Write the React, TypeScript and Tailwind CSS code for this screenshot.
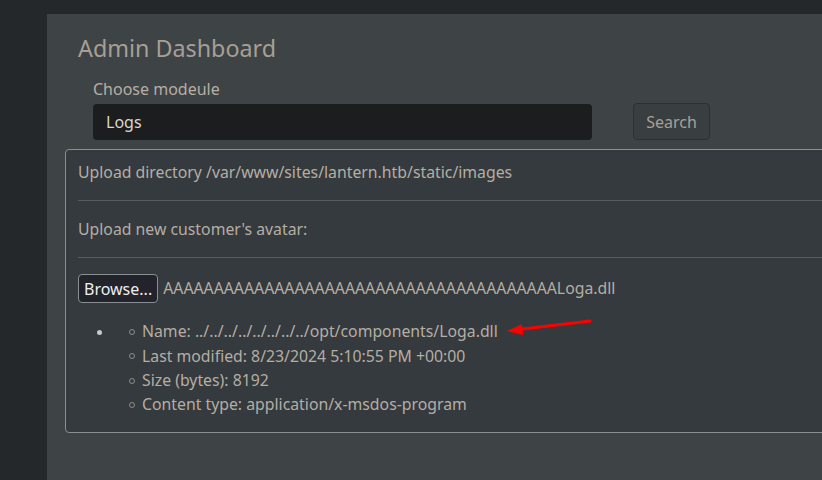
import React from "react";

export default function App() {
  const items = [
    "Name: ../../../../../../../../opt/components/Loga.dll",
    "Last modified: 8/23/2024 5:10:55 PM +00:00",
    "Size (bytes): 8192",
    "Content type: application/x-msdos-program",
  ];
  return (
    <div
      className="w-[822px] h-[480px] overflow-hidden bg-[#24282b] flex flex-col text-[#b6aea4]"
      style={{ fontFamily: '"Noto Sans", "Open Sans", sans-serif' }}
    >
      <div className="h-[14px] shrink-0" />
      <div className="flex flex-1 min-h-0">
        <div className="w-[47px] shrink-0" />
        <div className="flex-1 bg-[#3e4346] pl-[18px] pt-[20px] flex flex-col min-w-0">
          <h1 className="pl-[13px] text-[23.3px] leading-[28px] text-[#a79f95]">Admin Dashboard</h1>
          <div className="pl-[28px] mt-[17px] flex items-end">
            <div className="flex flex-col">
              <label className="text-[16px] leading-[20px] text-[#b6aea4]">Choose modeule</label>
              <div className="mt-[5px] w-[499px] h-[36px] rounded-[4px] bg-[#1b1d1f] flex items-center pl-[13px] text-[16px] text-[#ddd6cc]">
                Logs
              </div>
            </div>
            <button className="ml-[41px] w-[77px] h-[37px] rounded-[4px] border border-[#2c3033] bg-[#393e41] text-[16px] text-[#a8a096]">
              Search
            </button>
          </div>
          <div className="mt-[9px] w-[800px] h-[284px] shrink-0 border border-[#8a8f92] rounded-[4px] bg-[#343a3d] pl-[12px] pt-[10px] text-[15.8px]">
            <div className="leading-[24px]">Upload directory /var/www/sites/lantern.htb/static/images</div>
            <div className="mt-[16px] h-px bg-[#585d60]" />
            <div className="mt-[16px] leading-[24px]">Upload new customer's avatar:</div>
            <div className="mt-[16px] h-px bg-[#585d60]" />
            <div className="mt-[16px] flex items-center">
              <button className="h-[29px] px-[5px] rounded-[4px] border border-[#8a8f92] bg-[#23232b] text-[16px] text-[#eeeeee]">
                Browse...
              </button>
              <span className="ml-[5px]">AAAAAAAAAAAAAAAAAAAAAAAAAAAAAAAAAAAAAAALoga.dll</span>
            </div>
            <div className="relative mt-[17px] flex">
              <div className="w-[24px] shrink-0 flex items-center justify-end h-[24px]">
                <span className="block w-[5px] h-[5px] rounded-full bg-[#c9c9c9]" />
              </div>
              <div className="ml-[40px] flex flex-col">
                {items.map((t) => (
                  <div key={t} className="flex items-center h-[24.3px]">
                    <span className="block w-[6px] h-[6px] rounded-full border border-[#8d8d8d] mr-[7px] -ml-[13px]" />
                    <span>{t}</span>
                  </div>
                ))}
              </div>
              <svg
                className="absolute left-[428px] top-[-2px]"
                width="90"
                height="20"
                viewBox="0 0 90 20"
              >
                <line x1="84" y1="3" x2="12" y2="11.5" stroke="#ff0000" strokeWidth="3" strokeLinecap="round" />
                <polygon points="1,13 16,6 17,17" fill="#ff0000" />
              </svg>
            </div>
          </div>
        </div>
      </div>
    </div>
  );
}
